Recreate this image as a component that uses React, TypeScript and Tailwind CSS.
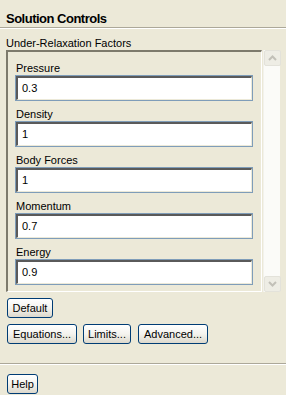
import type { ReactNode } from 'react'

type Field = {
  label: string
  value: string
}

const fields: Field[] = [
  { label: 'Pressure', value: '0.3' },
  { label: 'Density', value: '1' },
  { label: 'Body Forces', value: '1' },
  { label: 'Momentum', value: '0.7' },
  { label: 'Energy', value: '0.9' },
]

function XpButton({ children, className }: { children: ReactNode; className: string }) {
  return (
    <button
      type="button"
      className={
        'h-[20px] rounded-[3px] border border-[#003c74] bg-gradient-to-b from-[#ffffff] via-[#f4f3ee] to-[#dcd8cc] text-[11px] leading-[13px] text-black flex items-center justify-center ' +
        className
      }
    >
      {children}
    </button>
  )
}

function Chevron({ up }: { up: boolean }) {
  return (
    <svg width="9" height="6" viewBox="0 0 9 6" className="block">
      <path
        d={up ? 'M1 5 L4.5 1.5 L8 5' : 'M1 1 L4.5 4.5 L8 1'}
        fill="none"
        stroke="#c2c0b8"
        strokeWidth="2"
      />
    </svg>
  )
}

function ScrollButton({ up }: { up: boolean }) {
  return (
    <div className="h-[16px] w-[17px] rounded-[2px] border border-[#e3e2da] bg-[#eeede5] flex items-center justify-center">
      <Chevron up={up} />
    </div>
  )
}

export default function App() {
  return (
    <div className="w-[286px] h-[395px] bg-[#ece9d8] text-black font-['Liberation_Sans',Arial,sans-serif] overflow-hidden">
      <div className="px-[6px] pt-[11px] pb-[1px]">
        <h1 className="text-[13px] leading-[15px] font-bold tracking-[-0.5px]">Solution Controls</h1>
      </div>
      <div className="h-[2px] border-t border-b border-t-[#aca899] border-b-white" />

      <div className="px-[6px] pt-[8px] text-[11px] leading-[13px]">Under-Relaxation Factors</div>

      <div className="flex ml-[6px] h-[242px] gap-[1px]">
        <div className="w-[256px] border-t-2 border-l-2 border-r border-b border-t-[#7d7a6c] border-l-[#7d7a6c] border-r-white border-b-white pl-[7px] pt-[3px]">
          {fields.map((f) => (
            <div key={f.label}>
              <div className="pt-[7px] text-[11px] leading-[13px] pl-[1px]">{f.label}</div>
              <div className="w-[238px] h-[26px] border border-[#7f9db9]">
                <div className="h-full border-t-2 border-l-2 border-r border-b border-t-[#5a5a5a] border-l-[#5a5a5a] border-r-[#ece9d8] border-b-[#ece9d8] bg-white flex items-center pl-[4px] text-[11px] leading-[13px]">
                  {f.value}
                </div>
              </div>
            </div>
          ))}
        </div>
        <div className="w-[17px] bg-[#fbfbf8] border-l border-[#f3f2ec] flex flex-col justify-between">
          <ScrollButton up={true} />
          <ScrollButton up={false} />
        </div>
      </div>

      <div className="px-[7px] pt-[6px]">
        <XpButton className="w-[46px]">Default</XpButton>
      </div>
      <div className="px-[7px] pt-[6px] flex">
        <XpButton className="w-[70px]">Equations...</XpButton>
        <XpButton className="w-[48px] ml-[6px]">Limits...</XpButton>
        <XpButton className="w-[70px] ml-[7px]">Advanced...</XpButton>
      </div>

      <div className="mt-[19px] h-[2px] border-t border-b border-t-[#aca899] border-b-white" />

      <div className="px-[7px] pt-[9px]">
        <XpButton className="w-[31px]">Help</XpButton>
      </div>
    </div>
  )
}
